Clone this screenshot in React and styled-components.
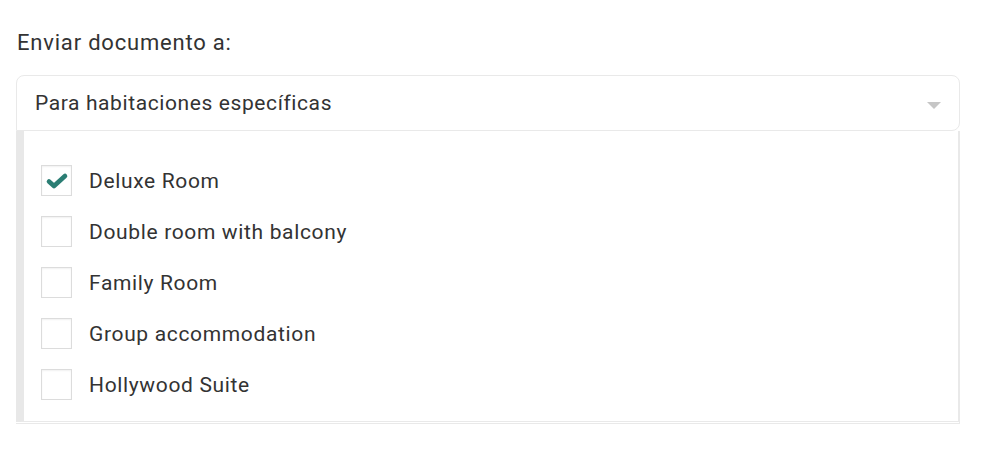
import React, { useState } from 'react';
import styled, { createGlobalStyle } from 'styled-components';

const GlobalStyle = createGlobalStyle`
  body {
    margin: 0;
    background: #ffffff;
    font-family: Roboto, "Liberation Sans", sans-serif;
    color: #333333;
  }
`;

const Container = styled.div`
  padding: 29px 26px 0 16px;
  width: 986px;
  box-sizing: border-box;
`;

const Label = styled.div`
  font-size: 22px;
  letter-spacing: 0.8px;
  line-height: 28px;
  color: #333333;
  margin-left: 1px;
  margin-bottom: 18px;
`;

const Select = styled.div`
  height: 56px;
  box-sizing: border-box;
  border: 1px solid #e9e9e9;
  border-radius: 8px 8px 8px 0;
  display: flex;
  align-items: center;
  justify-content: space-between;
  padding: 0 18px 0 18px;
  font-size: 21px;
  letter-spacing: 0.6px;
  color: #333333;
`;

const Caret = styled.span`
  width: 0;
  height: 0;
  border-left: 7px solid transparent;
  border-right: 7px solid transparent;
  border-top: 7px solid #c6c6c6;
  margin-top: 4px;
`;

const Panel = styled.div`
  border: 1px solid #e9e9e9;
  border-top: none;
  border-left: none;
  padding-bottom: 1px;
`;

const List = styled.div`
  border-left: 8px solid #e8e8e8;
  border-right: 1px solid #e9e9e9;
  border-bottom: 1px solid #e9e9e9;
  padding: 34px 0 21px 17px;
  display: flex;
  flex-direction: column;
  gap: 20px;
`;

const Row = styled.label`
  display: flex;
  align-items: center;
  cursor: pointer;
`;

const Box = styled.span`
  width: 31px;
  height: 31px;
  box-sizing: border-box;
  border: 1px solid #dcdcdc;
  box-shadow: inset 0 1px 2px rgba(0, 0, 0, 0.06);
  display: flex;
  align-items: center;
  justify-content: center;
  flex-shrink: 0;
`;

const Name = styled.span`
  margin-left: 17px;
  font-size: 21px;
  letter-spacing: 0.65px;
  color: #333333;
`;

const Check = () => (
  <svg width="24" height="18" viewBox="0 0 24 18">
    <path
      d="M4 9.5 L9 14 L20 4"
      fill="none"
      stroke="#2b7e74"
      strokeWidth="4.6"
      strokeLinecap="round"
      strokeLinejoin="round"
    />
  </svg>
);

const rooms = [
  'Deluxe Room',
  'Double room with balcony',
  'Family Room',
  'Group accommodation',
  'Hollywood Suite',
];

const App = () => {
  const [checked, setChecked] = useState({ 'Deluxe Room': true });

  return (
    <Container>
      <GlobalStyle />
      <Label>Enviar documento a:</Label>
      <Select>
        <span>Para habitaciones específicas</span>
        <Caret />
      </Select>
      <Panel>
        <List>
          {rooms.map((room) => (
            <Row key={room} onClick={() => setChecked({ ...checked, [room]: !checked[room] })}>
              <Box>{checked[room] ? <Check /> : null}</Box>
              <Name>{room}</Name>
            </Row>
          ))}
        </List>
      </Panel>
    </Container>
  );
};

export default App;
